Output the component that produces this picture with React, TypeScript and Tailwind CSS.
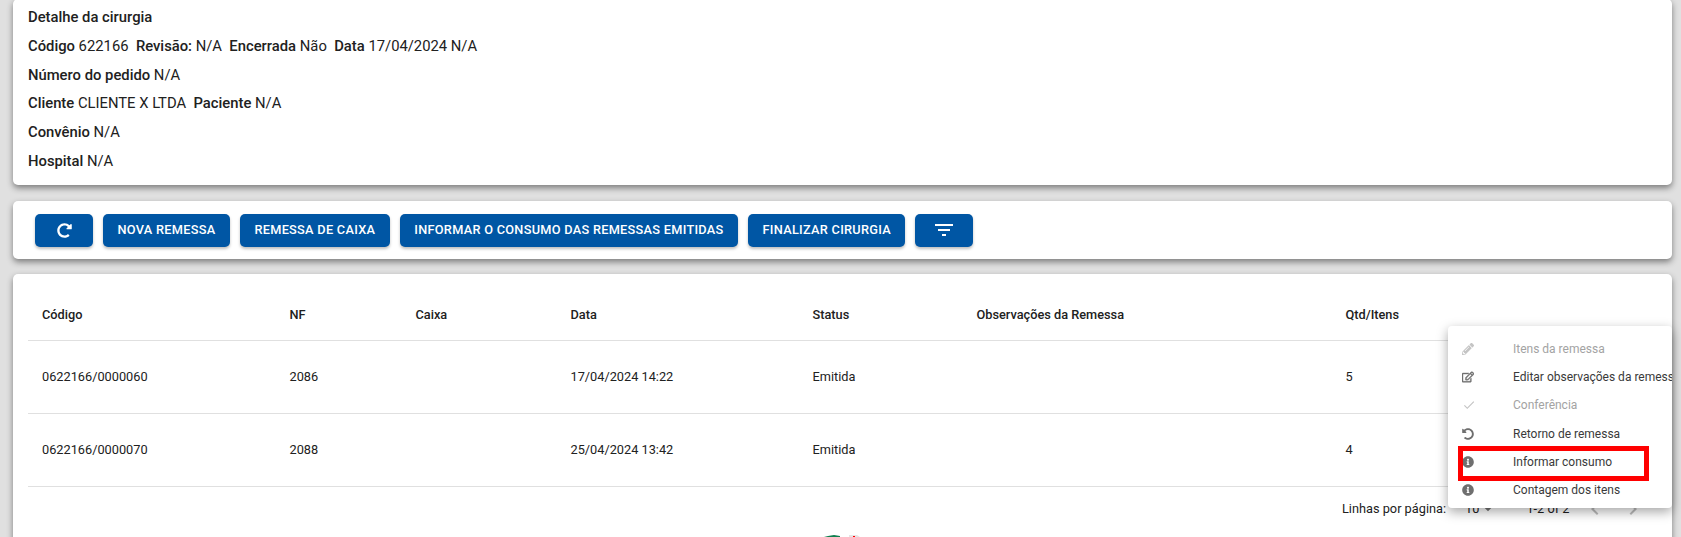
import { FaInfoCircle, FaPencilAlt, FaRedoAlt, FaRegEdit, FaUndoAlt } from 'react-icons/fa';
import { MdArrowDropDown, MdCheck, MdChevronLeft, MdChevronRight, MdFilterList } from 'react-icons/md';

const rows = [
  { codigo: '0622166/0000060', nf: '2086', data: '17/04/2024 14:22', status: 'Emitida', qtd: '5' },
  { codigo: '0622166/0000070', nf: '2088', data: '25/04/2024 13:42', status: 'Emitida', qtd: '4' },
];

const cols = 'grid grid-cols-[247.5px_126px_155px_242px_164px_369px_1fr] pl-[14px]';
const btn = 'h-[33px] px-[14.5px] rounded-[5px] bg-[#0056a4] text-white text-[12.75px] font-medium tracking-[0.28px] uppercase shadow-[0_2px_3px_rgba(0,0,0,0.25)] flex items-center justify-center';
const card = 'bg-white rounded-[5px] shadow-[0_3px_6px_rgba(0,0,0,0.45)]';
const line = 'h-[28.8px] leading-[28.8px]';

const menu = [
  { label: 'Itens da remessa', icon: <FaPencilAlt />, off: true },
  { label: 'Editar observações da remessa', icon: <FaRegEdit stroke="currentColor" strokeWidth={20} /> },
  { label: 'Conferência', icon: <MdCheck size={14} />, off: true },
  { label: 'Retorno de remessa', icon: <FaUndoAlt /> },
  { label: 'Informar consumo', icon: <FaInfoCircle /> },
  { label: 'Contagem dos itens', icon: <FaInfoCircle /> },
];

export default function App() {
  return (
    <div className="relative h-[537px] overflow-hidden bg-[#e0e0e0] pl-[13px] pr-[9px] font-['Roboto',sans-serif] text-[#212121]">
      <div className={`${card} h-[186px] -mt-px px-[15px] pt-[4px] text-[14.8px]`}>
        <p className={`${line} font-medium`}>Detalhe da cirurgia</p>
        <p className={line}>
          <b className="font-medium">Código</b> 622166 &nbsp;<b className="font-medium">Revisão:</b> N/A &nbsp;<b className="font-medium">Encerrada</b> Não &nbsp;<b className="font-medium">Data</b> 17/04/2024 N/A
        </p>
        <p className={line}><b className="font-medium">Número do pedido</b> N/A</p>
        <p className={line}><b className="font-medium">Cliente</b> CLIENTE X LTDA &nbsp;<b className="font-medium">Paciente</b> N/A</p>
        <p className={line}><b className="font-medium">Convênio</b> N/A</p>
        <p className={line}><b className="font-medium">Hospital</b> N/A</p>
      </div>

      <div className={`${card} h-[58px] mt-[16px] pl-[22px] flex items-center gap-[10px]`}>
        <button className={`${btn} w-[58px]`}><FaRedoAlt size={15} /></button>
        <button className={btn}>Nova remessa</button>
        <button className={btn}>Remessa de caixa</button>
        <button className={btn}>Informar o consumo das remessas emitidas</button>
        <button className={btn}>Finalizar cirurgia</button>
        <button className={`${btn} w-[58px]`}><MdFilterList size={24} /></button>
      </div>

      <div className={`${card} h-[300px] mt-[15px] px-[15px]`}>
        <div className={`${cols} h-[67px] items-center pt-[16px] border-b border-[#e0e0e0] text-[12.75px] font-medium`}>
          <span>Código</span><span>NF</span><span>Caixa</span><span>Data</span><span>Status</span><span>Observações da Remessa</span><span>Qtd/Itens</span>
        </div>
        {rows.map((r) => (
          <div key={r.codigo} className={`${cols} h-[73px] items-center border-b border-[#e0e0e0] text-[12.75px]`}>
            <span>{r.codigo}</span><span>{r.nf}</span><span /><span>{r.data}</span><span>{r.status}</span><span /><span>{r.qtd}</span>
          </div>
        ))}
        <div className="h-[44px] flex items-center text-[12.75px] pl-[1314px]">
          <span>Linhas por página:</span>
          <span className="ml-[19px]">10</span>
          <MdArrowDropDown size={18} className="text-[#757575]" />
          <span className="ml-[29px]">1-2 of 2</span>
          <MdChevronLeft size={24} className="ml-[14px] text-[#bdbdbd]" />
          <MdChevronRight size={24} className="ml-[14px] text-[#bdbdbd]" />
        </div>
      </div>

      <svg className="absolute left-[824px] top-[535px]" width="40" height="2" viewBox="0 0 40 2">
        <path d="M0 2 L4 1 L10 0 L16 1 L16 2 Z" fill="#0f7f4f" />
        <path d="M25 2 V0 L33 0 L36 2 Z" fill="#e5e5e5" />
        <rect x="29" y="1" width="2" height="1" fill="#f00" />
      </svg>

      <div className="absolute left-[1448px] top-[326px] w-[224px] h-[182px] overflow-hidden rounded-[4px] bg-white pt-[9px] shadow-[0_4px_12px_rgba(0,0,0,0.35)]">
        {menu.map((m) => (
          <div key={m.label} className={`h-[28.2px] flex items-center whitespace-nowrap text-[12px] ${m.off ? 'text-[#a3a3a3]' : 'text-[#3a3a3a]'}`}>
            <span className={`w-[65px] shrink-0 pl-[14px] text-[12px] ${m.off ? 'text-[#c4c4c4]' : 'text-[#6f6f6f]'}`}>{m.icon}</span>
            {m.label}
          </div>
        ))}
        <div className="absolute left-[10px] top-[119.5px] w-[191px] h-[35px] border-[5px] border-[#ff0000]" />
      </div>
    </div>
  );
}
